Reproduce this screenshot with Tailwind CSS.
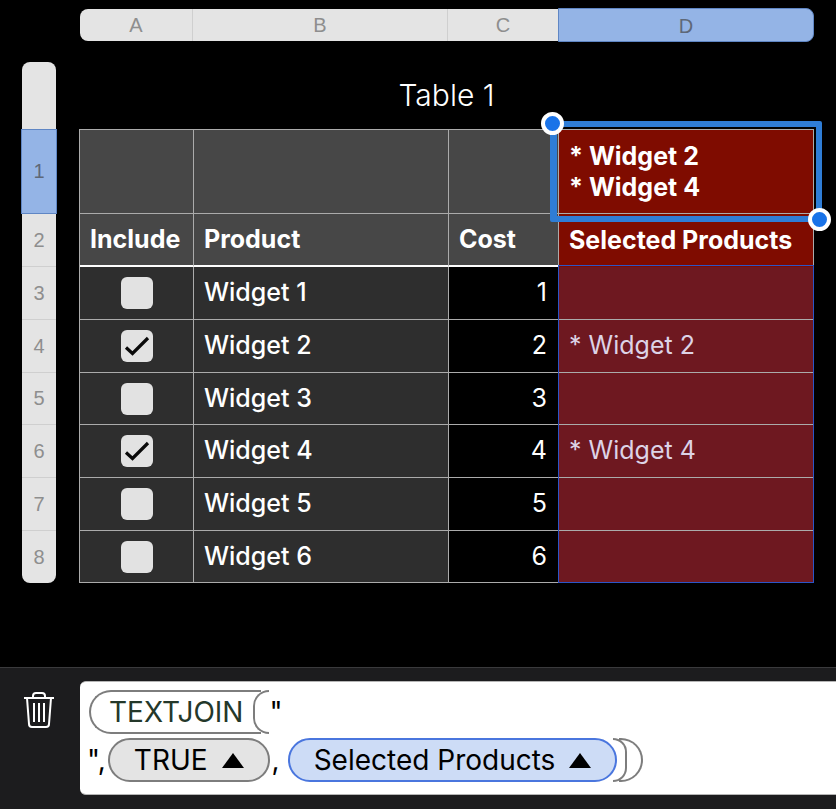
<!DOCTYPE html>
<html>
<head>
<meta charset="utf-8">
<script src="https://cdn.jsdelivr.net/npm/@tailwindcss/browser@4"></script>
</head>
<body class="bg-black">
<div class="w-[836px] h-[809px] overflow-hidden flex flex-col bg-black font-['Liberation_Sans',sans-serif]">
  <!-- sheet area -->
  <div class="relative h-[667px] shrink-0">
    <!-- column header -->
    <div class="absolute left-[80px] top-[9px] w-[734px] h-[32px] flex text-[20px] text-[#8e8e8e] leading-[32px] text-center">
      <div class="w-[113px] bg-[#e4e4e4] rounded-l-[8px] border-r border-[#cfcfcf]">A</div>
      <div class="w-[255px] bg-[#e4e4e4] border-r border-[#cfcfcf]">B</div>
      <div class="w-[110px] bg-[#e4e4e4]">C</div>
      <div class="w-[256px] -my-px h-[34px] leading-[34px] bg-[#94b4e6] border border-[#5f86c4] rounded-r-[8px] text-[#5e6878]">D</div>
    </div>
    <!-- row header -->
    <div class="absolute left-[22px] top-[62px] w-[34px] flex flex-col text-[20px] text-[#8e8e8e] text-center">
      <div class="h-[67px] bg-[#e4e4e4] rounded-t-[8px]"></div>
      <div class="h-[85px] -mx-px bg-[#94b4e6] border border-[#5f86c4] leading-[83px] text-[#5e6878]">1</div>
      <div class="h-[53px] bg-[#e4e4e4] border-b border-[#cfcfcf] leading-[52px]">2</div>
      <div class="h-[53px] bg-[#e4e4e4] border-b border-[#cfcfcf] leading-[52px]">3</div>
      <div class="h-[53px] bg-[#e4e4e4] border-b border-[#cfcfcf] leading-[52px]">4</div>
      <div class="h-[52px] bg-[#e4e4e4] border-b border-[#cfcfcf] leading-[51px]">5</div>
      <div class="h-[53px] bg-[#e4e4e4] border-b border-[#cfcfcf] leading-[52px]">6</div>
      <div class="h-[53px] bg-[#e4e4e4] border-b border-[#cfcfcf] leading-[52px]">7</div>
      <div class="h-[52px] bg-[#e4e4e4] rounded-b-[8px] leading-[52px]">8</div>
    </div>
    <!-- title -->
    <div class="absolute left-[79px] top-[76px] w-[735px] text-center text-white text-[30px] leading-[38px] font-['Inter',sans-serif] font-light">Table 1</div>
    <!-- table -->
    <div class="absolute left-[79px] top-[129px] grid grid-cols-[114px_255px_110px_255px] grid-rows-[84px_53px_53px_53px_52px_53px_53px_52px] w-[735px] border-l border-t border-[#ababab] text-white text-[25px] font-['Inter',sans-serif]">
      <div class="bg-[#474747] border-r border-b border-[#ababab]"></div>
      <div class="bg-[#474747] border-r border-b border-[#ababab]"></div>
      <div class="bg-[#474747] border-r border-b border-[#ababab]"></div>
      <div class="bg-[#7f0c00] border-r border-b border-[#ababab] font-bold pl-[10px] flex flex-col justify-center leading-[31px]"><span>* Widget 2</span><span>* Widget 4</span></div>

      <div class="bg-[#474747] border-r border-b-2 border-r-[#ababab] border-b-white font-bold pl-[10px] flex items-center">Include</div>
      <div class="bg-[#474747] border-r border-b-2 border-r-[#ababab] border-b-white font-bold pl-[10px] flex items-center">Product</div>
      <div class="bg-[#474747] border-r border-b-2 border-r-[#ababab] border-b-white font-bold pl-[10px] flex items-center">Cost</div>
      <div class="bg-[#7f0c00] border-r border-r-[#ababab] font-bold pl-[10px] flex items-center">Selected Products</div>

      <div class="bg-[#2e2e2e] border-r border-b border-[#ababab] flex items-center justify-center"><div class="w-[32px] h-[32px] rounded-[6px] bg-[#e2e2e2]"></div></div>
      <div class="bg-[#2e2e2e] border-r border-b border-[#ababab] pl-[10px] flex items-center font-medium">Widget 1</div>
      <div class="bg-black border-r border-b border-[#ababab] pr-[11px] flex items-center justify-end">1</div>
      <div class="bg-[#6e1820] border-r border-b border-[#ababab] pl-[10px] flex items-center text-[#ddd3e6]"></div>

      <div class="bg-[#2e2e2e] border-r border-b border-[#ababab] flex items-center justify-center"><div class="w-[32px] h-[32px] rounded-[6px] bg-[#e2e2e2] flex items-center justify-center"><svg width="32" height="32" viewBox="0 0 32 32" fill="none"><path d="M5 17.5l6.5 6L27 8" stroke="#0a0a0a" stroke-width="3.2"/></svg></div></div>
      <div class="bg-[#2e2e2e] border-r border-b border-[#ababab] pl-[10px] flex items-center font-medium">Widget 2</div>
      <div class="bg-black border-r border-b border-[#ababab] pr-[11px] flex items-center justify-end">2</div>
      <div class="bg-[#6e1820] border-r border-b border-[#ababab] pl-[10px] flex items-center text-[#ddd3e6]">* Widget 2</div>

      <div class="bg-[#2e2e2e] border-r border-b border-[#ababab] flex items-center justify-center"><div class="w-[32px] h-[32px] rounded-[6px] bg-[#e2e2e2]"></div></div>
      <div class="bg-[#2e2e2e] border-r border-b border-[#ababab] pl-[10px] flex items-center font-medium">Widget 3</div>
      <div class="bg-black border-r border-b border-[#ababab] pr-[11px] flex items-center justify-end">3</div>
      <div class="bg-[#6e1820] border-r border-b border-[#ababab]"></div>

      <div class="bg-[#2e2e2e] border-r border-b border-[#ababab] flex items-center justify-center"><div class="w-[32px] h-[32px] rounded-[6px] bg-[#e2e2e2] flex items-center justify-center"><svg width="32" height="32" viewBox="0 0 32 32" fill="none"><path d="M5 17.5l6.5 6L27 8" stroke="#0a0a0a" stroke-width="3.2"/></svg></div></div>
      <div class="bg-[#2e2e2e] border-r border-b border-[#ababab] pl-[10px] flex items-center font-medium">Widget 4</div>
      <div class="bg-black border-r border-b border-[#ababab] pr-[11px] flex items-center justify-end">4</div>
      <div class="bg-[#6e1820] border-r border-b border-[#ababab] pl-[10px] flex items-center text-[#ddd3e6]">* Widget 4</div>

      <div class="bg-[#2e2e2e] border-r border-b border-[#ababab] flex items-center justify-center"><div class="w-[32px] h-[32px] rounded-[6px] bg-[#e2e2e2]"></div></div>
      <div class="bg-[#2e2e2e] border-r border-b border-[#ababab] pl-[10px] flex items-center font-medium">Widget 5</div>
      <div class="bg-black border-r border-b border-[#ababab] pr-[11px] flex items-center justify-end">5</div>
      <div class="bg-[#6e1820] border-r border-b border-[#ababab]"></div>

      <div class="bg-[#2e2e2e] border-r border-b border-[#ababab] flex items-center justify-center"><div class="w-[32px] h-[32px] rounded-[6px] bg-[#e2e2e2]"></div></div>
      <div class="bg-[#2e2e2e] border-r border-b border-[#ababab] pl-[10px] flex items-center font-medium">Widget 6</div>
      <div class="bg-black border-r border-b border-[#ababab] pr-[11px] flex items-center justify-end">6</div>
      <div class="bg-[#6e1820] border-r border-b border-[#ababab]"></div>
    </div>
    <!-- referenced range outline -->
    <div class="absolute left-[558px] top-[265px] w-[256px] h-[318px] border-[1.5px] border-[#2b55c8]"></div>
    <!-- selection -->
    <div class="absolute left-[550px] top-[121px] w-[272px] h-[101px] border-[6px] border-l-[7px] border-[#2f7dd6] rounded-[2px]"></div>
    <div class="absolute left-[541px] top-[112px] w-[23px] h-[23px] rounded-full bg-[#1a73e8] border-[4px] border-white"></div>
    <div class="absolute left-[808px] top-[208px] w-[23px] h-[23px] rounded-full bg-[#1a73e8] border-[4px] border-white"></div>
  </div>
  <!-- formula bar -->
  <div class="flex-1 bg-[#1c1c1e] border-t border-[#3a3a3c] pt-[13px] pl-[22px] flex">
    <div class="w-[58px] shrink-0 pt-[10px]">
      <svg width="34" height="38" viewBox="0 0 34 38" fill="none" stroke="white" stroke-width="2"><path d="M2 7h30"/><path d="M11 7V5a3 3 0 0 1 3-3h6a3 3 0 0 1 3 3v2"/><path d="M5 7l2 26a3 3 0 0 0 3 3h14a3 3 0 0 0 3-3l2-26"/><path d="M12 12v19M17 12v19M22 12v19"/></svg>
    </div>
    <div class="w-[756px] h-[114px] bg-white rounded-l-[6px] border-y border-[#b5b5b5] text-[28px] text-black font-['Inter',sans-serif]">
      <div class="h-[56px] pl-[9px] pt-[8px] flex items-start">
        <div class="h-[44px] px-[18px] border-2 border-r-0 border-[#7d7d7d] rounded-l-full text-[#24382a] leading-[40px]">TEXTJOIN</div>
        <div class="w-[16px] h-[44px] -ml-[8px] border-2 border-r-0 border-[#7d7d7d] rounded-l-full bg-white"></div>
        <span class="leading-[44px]">"</span>
      </div>
      <div class="h-[56px] pl-[7px] flex items-start">
        <span class="leading-[44px]">",</span>
        <div class="h-[44px] ml-[2px] px-[24px] flex items-center gap-[14px] border-2 border-[#7d7d7d] rounded-full bg-[#e4e4e4]">TRUE <svg width="22" height="15" viewBox="0 0 22 15"><path d="M11 0l11 15H0z" fill="black"/></svg></div>
        <span class="leading-[44px] ml-[2px]">,</span>
        <div class="h-[44px] ml-[8px] px-[24px] flex items-center gap-[14px] border-2 border-[#4a76de] rounded-full bg-[#cddcf6]">Selected Products <svg width="22" height="15" viewBox="0 0 22 15"><path d="M11 0l11 15H0z" fill="black"/></svg></div>
        <div class="w-[14px] h-[44px] -ml-[4px] border-2 border-l-0 border-[#7d7d7d] rounded-r-full"></div>
        <div class="w-[24px] h-[44px] -ml-[8px] border-2 border-l-0 border-[#7d7d7d] rounded-r-full"></div>
      </div>
    </div>
  </div>
</div>
</body>
</html>
